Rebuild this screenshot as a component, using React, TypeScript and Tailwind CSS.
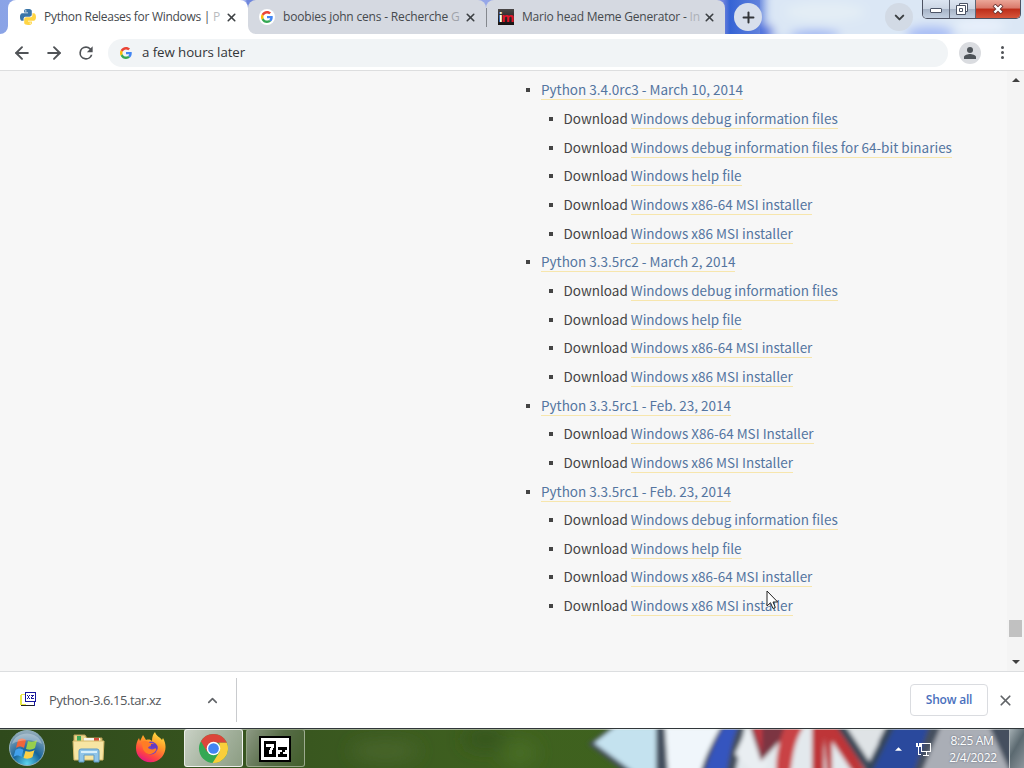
import React from 'react';
import { ArrowLeft, ArrowRight, ChevronDown, ChevronUp, Plus, X } from 'lucide-react';

interface Release {
  title: string;
  files: string[];
}

const RELEASES: Release[] = [
  {
    title: 'Python 3.4.0rc3 - March 10, 2014',
    files: [
      'Windows debug information files',
      'Windows debug information files for 64-bit binaries',
      'Windows help file',
      'Windows x86-64 MSI installer',
      'Windows x86 MSI installer',
    ],
  },
  {
    title: 'Python 3.3.5rc2 - March 2, 2014',
    files: [
      'Windows debug information files',
      'Windows help file',
      'Windows x86-64 MSI installer',
      'Windows x86 MSI installer',
    ],
  },
  {
    title: 'Python 3.3.5rc1 - Feb. 23, 2014',
    files: ['Windows X86-64 MSI Installer', 'Windows x86 MSI Installer'],
  },
  {
    title: 'Python 3.3.5rc1 - Feb. 23, 2014',
    files: [
      'Windows debug information files',
      'Windows help file',
      'Windows x86-64 MSI installer',
      'Windows x86 MSI installer',
    ],
  },
];

const GoogleIcon = ({ className }: { className: string }) => (
  <svg viewBox="0 0 48 48" className={className}>
    <path fill="#EA4335" d="M24 9.5c3.54 0 6.71 1.22 9.21 3.6l6.85-6.85C35.9 2.38 30.47 0 24 0 14.62 0 6.51 5.38 2.56 13.22l7.98 6.19C12.43 13.72 17.74 9.5 24 9.5z" />
    <path fill="#4285F4" d="M46.98 24.55c0-1.57-.15-3.09-.38-4.55H24v9.02h12.94c-.58 2.96-2.26 5.48-4.78 7.18l7.73 6c4.51-4.18 7.09-10.36 7.09-17.65z" />
    <path fill="#FBBC05" d="M10.53 28.59A14.5 14.5 0 0 1 9.77 24c0-1.6.27-3.14.76-4.59l-7.98-6.19A23.9 23.9 0 0 0 0 24c0 3.88.92 7.54 2.56 10.78l7.97-6.19z" />
    <path fill="#34A853" d="M24 48c6.48 0 11.93-2.13 15.89-5.81l-7.73-6c-2.15 1.45-4.92 2.3-8.16 2.3-6.26 0-11.57-4.22-13.47-9.91l-7.98 6.19C6.51 42.62 14.62 48 24 48z" />
  </svg>
);

const PythonIcon = () => (
  <svg viewBox="0 0 24 24" className="size-4 shrink-0">
    <path fill="#3b75a8" d="M11.9 0C5.8 0 6.2 2.6 6.2 2.6v2.8H12v.8H3.9S0 5.8 0 11.9s3.4 5.9 3.4 5.9h2v-2.9s-.1-3.4 3.3-3.4h5.8s3.2 0 3.2-3.1V3.2S18.2 0 11.9 0zM8.7 1.8a1.05 1.05 0 1 1 0 2.1 1.05 1.05 0 0 1 0-2.1z" />
    <path fill="#ffd544" d="M12.1 24c6.1 0 5.7-2.6 5.7-2.6v-2.8H12v-.8h8.1S24 18.2 24 12.1s-3.4-5.9-3.4-5.9h-2v2.9s.1 3.4-3.3 3.4H9.5s-3.2 0-3.2 3.1v5.2S5.8 24 12.1 24zm3.2-1.8a1.05 1.05 0 1 1 0-2.1 1.05 1.05 0 0 1 0 2.1z" />
  </svg>
);

const ReloadIcon = () => (
  <svg viewBox="0 0 24 24" className="size-5" fill="#505357">
    <path d="M17.65 6.35A7.96 7.96 0 0 0 12 4a8 8 0 1 0 7.73 10h-2.08A6 6 0 1 1 12 6c1.66 0 3.14.69 4.22 1.78L13 11h7V4l-2.35 2.35z" />
  </svg>
);

const TabStrip = () => (
  <div className="relative flex h-[34px] overflow-hidden bg-[linear-gradient(90deg,#8aa3e6_0px,#a8b7ef_245px,#6f86dc_247px,#96a7e8_487px,#7787de_722px,#3563d5_730px,#5f80dc_758px,#b9cff1_790px,#dce8f7_850px,#d8e3f8_1024px)]">
    <svg className="absolute left-[760px] top-0 h-[34px] w-[264px]" viewBox="0 0 264 34">
      <defs>
        <filter id="glass" x="-20%" y="-40%" width="140%" height="180%"><feGaussianBlur stdDeviation="5" /></filter>
      </defs>
      <g filter="url(#glass)">
        <rect x="5" y="-10" width="280" height="50" fill="#dbe7f5" />
        <ellipse cx="0" cy="32" rx="14" ry="8" fill="#4b70dd" />
        <ellipse cx="55" cy="35" rx="25" ry="5" fill="#9cb4f2" />
        <ellipse cx="170" cy="34" rx="24" ry="8" fill="#a9bef5" />
        <ellipse cx="65" cy="12" rx="40" ry="10" fill="#e3edf5" />
        <ellipse cx="220" cy="26" rx="26" ry="6" fill="#e9f1fc" />
      </g>
    </svg>

    <div className="relative ml-2 flex w-[240px] items-center rounded-t-[8px] bg-white pl-3 pr-[9px]">
      <svg className="absolute -left-2 bottom-0 size-2" viewBox="0 0 8 8"><path d="M8 0v8H0a8 8 0 0 0 8-8z" fill="#fff" /></svg>
      <PythonIcon />
      <span className="ml-2 w-[174px] whitespace-nowrap text-[12px] tracking-[-0.29px] text-[#45494d]">
        Python Releases for Windows | <span className="text-[#b9bbbe]">P</span>
      </span>
      <X className="ml-[7px] size-[13px] shrink-0 text-[#3c4043]" strokeWidth={3} />
    </div>

    <div className="relative flex w-[238px] items-center rounded-t-[8px] bg-[#d5d9e1] pl-[11px]">
      <svg className="absolute bottom-0 left-0 size-2" viewBox="0 0 8 8"><path d="M0 0v8h8a8 8 0 0 1-8-8z" fill="#fff" /></svg>
      <span className="flex size-4 shrink-0 items-center justify-center rounded-full bg-white">
        <GoogleIcon className="size-3" />
      </span>
      <span className="ml-2 w-[174px] whitespace-nowrap text-[12px] tracking-[-0.18px] text-[#45494d]">
        boobies john cens - Recherche <span className="text-[#9fa3aa]">G</span>
      </span>
      <X className="ml-[7px] size-[13px] shrink-0 text-[#3c4043]" strokeWidth={3} />
    </div>

    <div className="relative flex w-[239px] items-center rounded-t-[8px] bg-[#d5d9e1] pl-3">
      <span className="absolute left-0 top-[8px] h-[19px] w-px bg-[#84888e]" />
      <span className="flex size-4 shrink-0 items-end justify-center bg-[linear-gradient(#4a4747,#151010)] text-[13px] font-bold leading-[15px] tracking-[-1px]">
        <span className="text-white">i</span>
        <span className="text-[#e3142a]">m</span>
      </span>
      <span className="ml-2 w-[176px] whitespace-nowrap text-[12px] tracking-[-0.2px] text-[#45494d]">
        Mario head Meme Generator - <span className="text-[#adb1b8]">In</span>
      </span>
      <X className="ml-[5px] size-[13px] shrink-0 text-[#3c4043]" strokeWidth={3} />
    </div>

    <div className="relative ml-[9px] mt-[3px] flex size-7 items-center justify-center rounded-full bg-[#d8dfec]">
      <Plus className="size-[17px] text-[#33363a]" strokeWidth={2.8} />
    </div>

    <div className="relative ml-[123px] mt-[3px] flex size-7 items-center justify-center rounded-full bg-[#d2dae5]">
      <ChevronDown className="size-[15px] text-[#3c4043]" strokeWidth={3.2} />
    </div>

    <div className="relative ml-[9px] flex h-[19px] w-[99px] overflow-hidden rounded-b-[5px] border border-t-0 border-[#4d5262]">
      <div className="flex w-[27px] items-center justify-center border-r border-[#5f6675] bg-[linear-gradient(#dce5f1_0%,#ccd6e4_48%,#a6b3c6_50%,#c3d0e1_100%)]">
        <span className="mt-[3px] h-[5px] w-3 rounded-[1px] border border-[#4d5567] bg-white" />
      </div>
      <div className="flex w-[26px] items-center justify-center border-r border-[#5f6675] bg-[linear-gradient(#dce5f1_0%,#ccd6e4_48%,#a6b3c6_50%,#c3d0e1_100%)]">
        <svg viewBox="0 0 12 12" className="-ml-[2px] size-3" fill="#fff" stroke="#4a5264">
          <path d="M3.5.5h8v8h-8z" />
          <path d="M.5 2.500h9v9h-9z" />
          <path d="M3.500 5.500h3v3h-3z" />
        </svg>
      </div>
      <div className="flex flex-1 items-center justify-center bg-[linear-gradient(#eba698_0%,#d9796a_45%,#bd2d19_50%,#d6553b_100%)]">
        <svg viewBox="0 0 12 10" className="h-[10px] w-3">
          <path d="M2 1l8 8M10 1L2 9" stroke="#693331" strokeWidth="4" />
          <path d="M2.500 1.500l7 7M9.500 1.500l-7 7" stroke="#fff" strokeWidth="2.400" />
        </svg>
      </div>
    </div>
  </div>
);

const Toolbar = () => (
  <div className="flex h-[37px] items-center border-b border-[#dddedf] bg-white pl-3 pt-px">
    <ArrowLeft className="size-5 text-[#505357]" strokeWidth={2.3} />
    <ArrowRight className="ml-3 size-5 text-[#505357]" strokeWidth={2.3} />
    <div className="ml-3">
      <ReloadIcon />
    </div>
    <div className="ml-3 flex h-7 w-[840px] items-center rounded-full bg-[#f1f4f6] pl-3">
      <GoogleIcon className="size-3" />
      <span className="ml-[10px] text-[13.3px] tracking-[-0.08px] text-[#333639]">a few hours later</span>
    </div>
    <div className="ml-[11px] flex size-[22px] items-center justify-center rounded-full bg-[#dadce0]">
      <svg viewBox="0 0 14 14" className="size-[14px]" fill="#4e5358">
        <circle cx="7" cy="4" r="3" />
        <path d="M1 13v-2c0-2 4-3 6-3s6 1 6 3v2z" />
      </svg>
    </div>
    <div className="ml-5 flex flex-col gap-[2px]">
      <span className="size-[3px] rounded-full bg-[#505357]" />
      <span className="size-[3px] rounded-full bg-[#505357]" />
      <span className="size-[3px] rounded-full bg-[#505357]" />
    </div>
  </div>
);

const ReleaseList = () => (
  <ul className="pl-[526px] pt-[5px] font-['Noto_Sans_CJK_SC','Noto_Sans',sans-serif] text-[13.5px] leading-[28.67px] text-[#444]">
    {RELEASES.map((release, i) => (
      <li key={i}>
        <div className="flex h-[28.67px] items-center">
          <span className="mr-[11px] size-1 bg-[#444]" />
          <a className="border-b border-[#f7e6ad] leading-[19px] text-[#5475a0]">{release.title}</a>
        </div>
        <ul className="pl-[23px]">
          {release.files.map((file) => (
            <li key={file} className="flex h-[28.67px] items-center whitespace-pre">
              <span className="mr-[10.5px] size-1 bg-[#444]" />
              <span className="border-b border-transparent leading-[19px]">Download </span>
              <a className="border-b border-[#f7e6ad] leading-[19px] text-[#5475a0]">{file}</a>
            </li>
          ))}
        </ul>
      </li>
    ))}
  </ul>
);

const Scrollbar = () => (
  <div className="flex w-[17px] flex-col items-center bg-[#f4f4f4]">
    <svg viewBox="0 0 8 4" className="mt-[7px] h-1 w-2"><path d="M0 4l4-4 4 4z" fill="#404040" /></svg>
    <div className="mt-[538px] h-[17px] w-[13px] bg-[#c1c1c1]" />
    <svg viewBox="0 0 8 4" className="mt-[23px] h-1 w-2"><path d="M0 0h8L4 4z" fill="#404040" /></svg>
  </div>
);

const DownloadShelf = () => (
  <div className="flex h-[57px] items-center border-t border-[#dcdee0] bg-white">
    <svg viewBox="0 0 16 16" className="-mt-[3px] ml-5 size-4" shapeRendering="crispEdges">
      <path d="M0 4h1V3h5v11H0z" fill="#e9e84a" />
      <path d="M2 4h4v9H2z" fill="#fff" />
      <path d="M1 14h14v1H1z" fill="#222" />
      <path d="M14 11h1v4h-1z" fill="#17179c" />
      <path d="M5.500 1.500h10v9h-10z" fill="#fff" stroke="#17179c" />
      <path d="M7 4h1v1H7zM9 4h1v1H9zM8 5h1v2H8zM7 7h1v1H7zM9 7h1v1H9zM11 4h3v1h-1v1h-1v1h2v1h-3V6h1V5h-1z" fill="#17179c" />
    </svg>
    <span className="ml-[13px] w-[160px] pt-px text-[13px] tracking-[-0.42px] text-[#55585c]">Python-3.6.15.tar.xz</span>
    <ChevronUp className="-ml-[4px] size-[15px] text-[#626569]" strokeWidth={2.6} />
    <div className="ml-4 h-11 w-px bg-[#c9cbce]" />
    <button className="ml-[673px] h-8 w-[78px] rounded-[4px] border border-[#dadce0] text-[12px] font-semibold tracking-[-0.2px] text-[#4a70bd]">
      Show all
    </button>
    <X className="ml-[9px] size-[17px] text-[#616468]" strokeWidth={2.4} />
  </div>
);

// Blurred wallpaper that shows through the taskbar glass
const Wallpaper = () => (
  <svg className="absolute inset-0 h-10 w-full" viewBox="0 0 1024 40" preserveAspectRatio="none">
    <defs>
      <filter id="soft" x="-5%" y="-20%" width="110%" height="140%"><feGaussianBlur stdDeviation="2" /></filter>
      <filter id="haze" x="-50%" y="-50%" width="200%" height="200%"><feGaussianBlur stdDeviation="9" /></filter>
      <linearGradient id="grass">
        <stop offset="0" stopColor="#2f4a1c" />
        <stop offset=".3" stopColor="#39571f" />
        <stop offset=".5" stopColor="#3f611f" />
        <stop offset="1" stopColor="#3c641b" />
      </linearGradient>
    </defs>
    <rect width="1024" height="40" fill="url(#grass)" />
    <g filter="url(#haze)">
      <ellipse cx="385" cy="22" rx="34" ry="8" fill="#4c672f" />
      <ellipse cx="485" cy="10" rx="22" ry="10" fill="#35551f" />
      <ellipse cx="520" cy="24" rx="16" ry="12" fill="#4a6e27" />
    </g>
    <g filter="url(#soft)">
      <path d="M588 15L612-3h430v48H627z" fill="#44505e" />
      <path d="M594 14L616-3h40v48h-20z" fill="#c4e2ef" />
      <path d="M665-3h56c-7 14-15 27-21 48h-32z" fill="#f0f6fb" />
      <path d="M724-3h14c-6 15-8 27-12 48h-22c6-20 12-34 20-48z" fill="#3454bf" />
      <path d="M745-3h125l25 48H735z" fill="#e3e9ed" />
      <path d="M735 25L748-3h8l12 40-13 8z" fill="#e9eef2" />
      <path d="M750-3h44L761 32z" fill="#7b3642" />
      <path d="M753-3h9v28z" fill="#bf3743" />
      <path d="M785-3h19c-10 15-11 30-14 48h-14c0-20 3-33 9-48z" fill="#c94245" />
      <path d="M812-3h27l28 48h-13L832 12v33h-5L824 8v37h-12z" fill="#be3439" />
      <path d="M836-3h10l32 48h-10z" fill="#3c4858" />
      <path d="M846-3h40l-17 35z" fill="#dfe3e6" />
      <path d="M892-3h37l-16 48h-42z" fill="#2b4a9d" />
      <path d="M887-3h8l-23 46h-8z" fill="#36465b" />
      <path d="M941-3h48l22 48h-90z" fill="#aaaeb6" />
    </g>
  </svg>
);

const Taskbar = () => (
  <div className="relative flex h-10 overflow-hidden border-t border-[#30363a]">
    <Wallpaper />
    <div className="absolute inset-x-0 top-0 h-px bg-white/50" />

    <svg viewBox="0 0 38 38" className="relative ml-2 size-[38px]">
      <defs>
        <radialGradient id="orb" cx=".5" cy=".95" r=".9">
          <stop offset="0" stopColor="#5ed5ee" />
          <stop offset=".45" stopColor="#17649b" />
          <stop offset="1" stopColor="#8da8b9" />
        </radialGradient>
      </defs>
      <circle cx="19" cy="19" r="17.500" fill="url(#orb)" stroke="#91b1bd" />
      <path d="M10 11c3-2 5-2 8 0l-2 8c-3-2-5-2-8 0z" fill="#f0653a" />
      <path d="M20 12c3 1 6 1 9-1l-2 8c-3 2-6 2-9 1z" fill="#97ce4d" />
      <path d="M7.500 21c3-2 5-2 8 0l-2 7c-3-2-5-2-8 0z" fill="#42a1ed" />
      <path d="M17.500 22c3 1 6 1 9-1l-2 7c-3 2-6 2-9 1z" fill="#fcd046" />
      <path d="M4 15C8 1 30 1 34 15 25 10 13 10 4 15z" fill="#fff" opacity=".3" />
    </svg>

    <svg viewBox="0 0 34 32" className="relative ml-[26px] mt-[4px] h-8 w-[34px]">
      <path d="M2 5V2h11l2 3h15v5H2z" fill="#e9d58a" stroke="#bb9f59" />
      <path d="M5 3h4v5H5z" fill="#3da75a" />
      <path d="M12 5h16v4H12z" fill="#f6f6ee" />
      <path d="M22 5h5v3h-5z" fill="#d34e3b" />
      <path d="M1 8h31l-1 19H2z" fill="#f7e5a3" stroke="#d5b96b" />
      <path d="M7 29V18q0-2 2-2h16q2 0 2 2v11h-5v-7H12v7z" fill="#8fc4e8" stroke="#5e9ac5" />
      <path d="M9 19h16" stroke="#d8effa" strokeWidth="2" />
    </svg>

    <svg viewBox="0 0 32 32" className="relative ml-[29px] mt-[2px] size-8">
      <defs>
        <linearGradient id="fire" x1=".8" y1="0" x2=".3" y2="1">
          <stop offset="0" stopColor="#ffe645" />
          <stop offset=".4" stopColor="#ff9828" />
          <stop offset=".75" stopColor="#ff4541" />
          <stop offset="1" stopColor="#e31587" />
        </linearGradient>
      </defs>
      <path d="M20 1c1 4 5 5 7 8l1-2c4 7 3 14-1 19-6 7-17 7-23 0C0 21 0 13 4 7l1 3 3-6 3 5c3-1 5 0 6 1 0-4 1-7 3-9z" fill="url(#fire)" />
      <circle cx="16" cy="17" r="6.500" fill="#7043c4" />
      <path d="M6 11c4-2 7-1 9 1h4c-1 3-5 2-6 5 3 2 6 2 9-1-1 7-8 9-12 5-3-3-2-6-4-10z" fill="#ff7c25" />
      <path d="M16 13c5-2 8 2 6 6-1-2-3-3-6-2z" fill="#643bc2" />
    </svg>

    <div className="relative ml-[17px] flex h-[38px] w-[59px] items-center justify-center rounded-[3px] border border-white/80 bg-[linear-gradient(120deg,#c9d1c5_0%,#aab7a4_45%,#8c9d83_100%)]">
      <svg viewBox="0 0 32 32" className="-ml-px size-[31px]">
        <circle cx="16" cy="16" r="15" fill="#34a853" />
        <path d="M3 8.500A15 15 0 0 1 29 8.500L30 10H16l-6.500 9.500z" fill="#dc463a" />
        <path d="M29.700 10A15 15 0 0 1 15 31l7.500-12L22 10z" fill="#f9ce3b" />
        <circle cx="16" cy="16" r="7" fill="#fff" />
        <circle cx="16" cy="16" r="5.500" fill="#4285f4" />
      </svg>
    </div>

    <div className="relative ml-[3px] flex h-[38px] w-[59px] items-center justify-center rounded-[3px] border border-[#a5b397]/80 bg-[linear-gradient(120deg,#8c9983_0%,#566b46_50%,#435f2b_100%)]">
      <svg viewBox="0 0 32 26" className="-ml-px mt-px h-[26px] w-8" shapeRendering="crispEdges">
        <path d="M0 0h32v26H0z" fill="#000" />
        <path d="M2 2h28v22H2z" fill="#fff" />
        <path d="M5 5h12v16H5z" fill="#000" />
        <path d="M7 8h8v4h-1v2h-1v4h-3v-4h1v-2h1v-1H7z" fill="#fff" />
        <path d="M19 11h9v3h-2v2h-2v2h4v3h-9v-3h2v-2h2v-2h-4z" fill="#000" />
      </svg>
    </div>

    <div className="relative ml-auto flex items-center text-white">
      <svg viewBox="0 0 8 4" className="h-1 w-[7px]"><path d="M0 4l4-4 4 4z" fill="#fff" /></svg>
      <svg viewBox="0 0 16 16" className="ml-[14px] size-4" fill="none" stroke="#fff" shapeRendering="crispEdges">
        <path d="M5.500 2.500h9v8h-9zM10.500 11v3M7 14.500h6M2.500 6v8M1 2v3.500h3V2M2.500 13.500H5" strokeWidth="1.200" />
      </svg>
      <div className="ml-[15px] w-[52px] text-center text-[12px] leading-[17px] tracking-[-0.3px] [text-shadow:0_0_2px_#596273]">
        <div className="pr-[2px]">8:25 AM</div>
        <div className="whitespace-nowrap">2/4/2022</div>
      </div>
      <div className="ml-[10px] h-full w-[15px] border-l border-white/50 bg-[linear-gradient(120deg,#a2adb1,#5b6970_45%,#8d969c)]" />
    </div>
  </div>
);

export default function App() {
  return (
    <div className="relative flex h-[768px] w-[1024px] flex-col overflow-hidden bg-white font-['Open_Sans',sans-serif]">
      <TabStrip />
      <Toolbar />
      <main className="flex h-[600px] bg-[#f7f7f7]">
        <div className="flex-1">
          <ReleaseList />
        </div>
        <Scrollbar />
      </main>
      <DownloadShelf />
      <Taskbar />

      {/* mouse pointer */}
      <svg viewBox="0 0 13 20" className="absolute left-[766px] top-[590px] h-5 w-[13px]">
        <path d="M1 1v15l3.500-3.300L7 18.500l2.300-1L7 12h4.700z" fill="#fff" stroke="#222" />
      </svg>
    </div>
  );
}
